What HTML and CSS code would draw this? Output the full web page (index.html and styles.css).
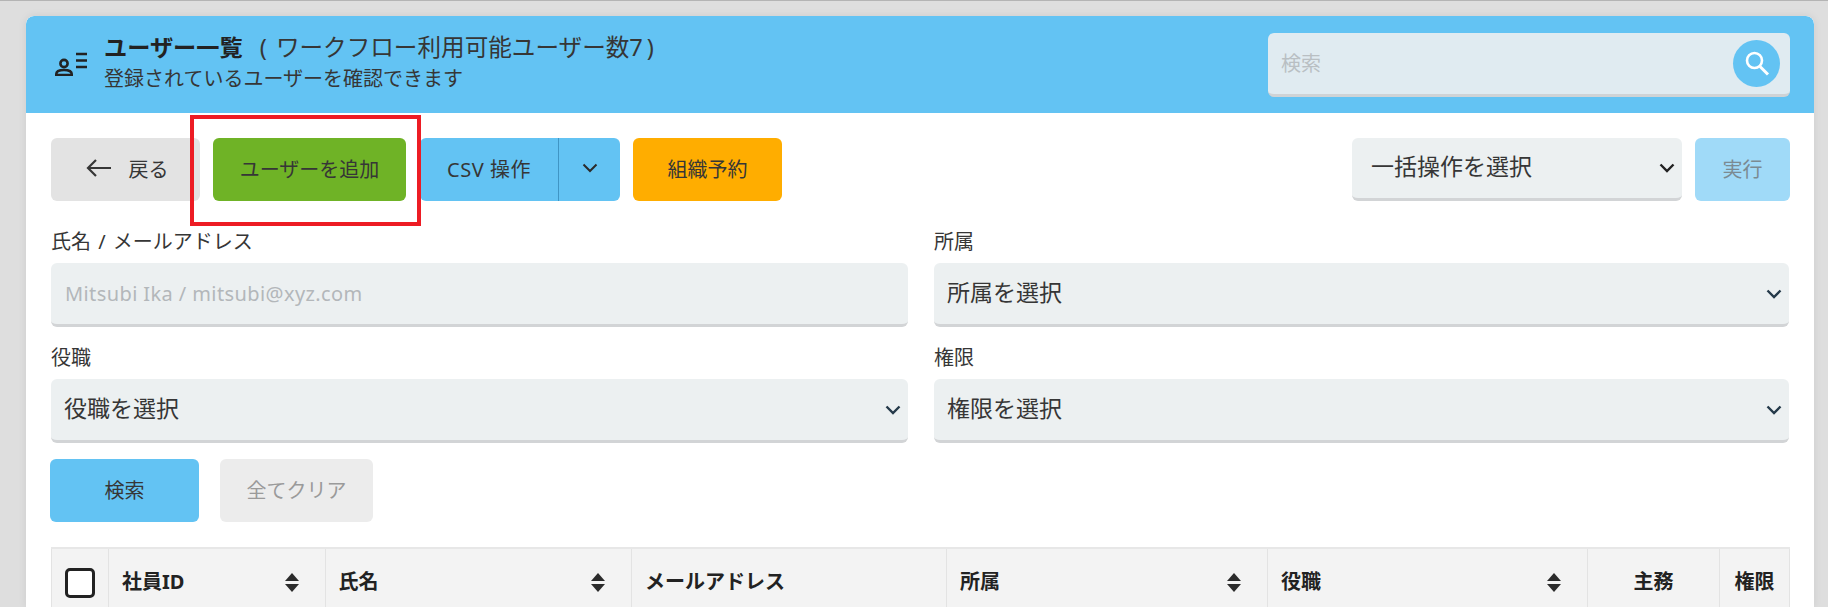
FILE: index.html
```html
<!DOCTYPE html>
<html lang="ja">
<head>
<meta charset="utf-8">
<title>ユーザー一覧</title>
<link rel="stylesheet" href="styles.css">
</head>
<body>
<main class="card">
  <header class="card-head">
    <svg class="head-icon" width="32" height="24" viewBox="0 0 32 24" fill="none" stroke="#222" stroke-width="2.6">
      <circle cx="9" cy="11.5" r="3.6"/>
      <path d="M1.3 23v-1c0-2.6 3-4 7.7-4s7.700 1.400 7.700 4v1z"/>
      <path d="M21 2h11M21 8.500h11M21 15h11"/>
    </svg>
    <div class="head-text">
      <h1 class="head-title"><b>ユーザー一覧</b><span class="head-count">( ワークフロー利用可能ユーザー数7&#8201;)</span></h1>
      <p class="head-sub">登録されているユーザーを確認できます</p>
    </div>
    <div class="head-search">
      <input class="head-input" type="text" placeholder="検索">
      <span class="head-search-btn">
        <svg width="28" height="28" viewBox="0 0 28 28" fill="none" stroke="#fff" stroke-width="2.600">
          <circle cx="11.500" cy="10.500" r="7.500"/>
          <path d="M17 16.500l8 8" stroke-width="3"/>
        </svg>
      </span>
    </div>
  </header>

  <section class="card-body">
    <div class="toolbar">
      <button class="btn btn-back" type="button">
        <svg width="26" height="20" viewBox="0 0 26 20" fill="none" stroke="#363636" stroke-width="2.200"><path d="M25 10H2M10 2l-8 8 8 8"/></svg>
        <span>戻る</span>
      </button>
      <span class="highlight">
        <button class="btn btn-add" type="button">ユーザーを追加</button>
      </span>
      <div class="split">
        <button class="btn split-main" type="button">CSV 操作</button>
        <button class="btn split-arrow" type="button" aria-label="CSV 操作">
          <svg width="16" height="10" viewBox="0 0 16 10" fill="none" stroke="#2b2b2b" stroke-width="2"><path d="M1.500 1.500L8 8l6.500-6.500"/></svg>
        </button>
      </div>
      <button class="btn btn-reserve" type="button">組織予約</button>
      <select class="select select-bulk"><option>一括操作を選択</option></select>
      <button class="btn btn-run" type="button">実行</button>
    </div>

    <div class="filters">
      <label class="field">
        <span class="field-label">氏名 / メールアドレス</span>
        <input class="field-input" type="text" placeholder="Mitsubi Ika / mitsubi@xyz.com">
      </label>
      <label class="field">
        <span class="field-label">所属</span>
        <select class="select"><option>所属を選択</option></select>
      </label>
      <label class="field">
        <span class="field-label">役職</span>
        <select class="select"><option>役職を選択</option></select>
      </label>
      <label class="field">
        <span class="field-label">権限</span>
        <select class="select"><option>権限を選択</option></select>
      </label>
    </div>

    <div class="actions">
      <button class="btn btn-search" type="button">検索</button>
      <button class="btn btn-clear" type="button">全てクリア</button>
    </div>

    <table class="users">
      <colgroup>
        <col class="c-check"><col class="c-id"><col class="c-name"><col class="c-mail">
        <col class="c-dept"><col class="c-role"><col class="c-main"><col class="c-perm">
      </colgroup>
      <thead>
        <tr>
          <th class="th-check"><span class="check"></span></th>
          <th><div class="th-in">社員ID<span class="sort"></span></div></th>
          <th><div class="th-in">氏名<span class="sort"></span></div></th>
          <th><div class="th-in">メールアドレス</div></th>
          <th><div class="th-in">所属<span class="sort"></span></div></th>
          <th><div class="th-in">役職<span class="sort"></span></div></th>
          <th class="th-center">主務</th>
          <th class="th-center">権限</th>
        </tr>
      </thead>
    </table>
  </section>
</main>
</body>
</html>
```
FILE: styles.css
```css
* { box-sizing: border-box; }
html, body { margin: 0; height: 607px; overflow: hidden; }
body {
  background: #dedede;
  border-top: 1px solid #b4b4b4;
  padding: 15px 14px 0 26px;
  font-family: "Noto Sans", "Noto Sans CJK JP", sans-serif;
  color: #363636;
  font-size: 20px;
}
.card {
  background: #fff;
  border-radius: 8px 8px 0 0;
  height: 591px;
  box-shadow: 0 0 8px rgba(0, 0, 0, .08);
  overflow: hidden;
}
.card-head {
  height: 97px;
  background: #63c3f3;
  border-radius: 8px 8px 0 0;
  display: flex;
  align-items: flex-start;
  padding: 0 24px 0 29px;
}
.head-icon { margin-top: 36px; flex: none; }
.head-text { margin-left: 17px; margin-top: 14px; flex: 1; }
.head-title {
  margin: 0;
  font-size: 23.600px;
  line-height: 34px;
  font-weight: 400;
  color: #363636;
  white-space: nowrap;
}
.head-title b { font-weight: 700; color: #222; font-size: 23.200px; }
.head-count { margin-left: 17px; word-spacing: 3px; }
.head-sub { margin: 1px 0 0; font-size: 20px; line-height: 28px; }
.head-search {
  margin-top: 17px;
  width: 522px;
  height: 64px;
  background: #e0ebf1;
  border-bottom: 3px solid #cfd3d6;
  border-radius: 6px;
  display: flex;
  align-items: center;
  padding: 0 10px 0 13px;
}
.head-input {
  flex: 1;
  border: 0;
  outline: 0;
  background: transparent;
  font: inherit;
  color: #363636;
  padding: 0;
}
.head-input::placeholder { color: #b9bfc3; }
.head-search-btn {
  width: 47px;
  height: 47px;
  border-radius: 50%;
  background: #63c3f3;
  display: flex;
  align-items: center;
  justify-content: center;
}
.card-body { padding: 25px 24px 0 25px; }
.btn {
  height: 63px;
  border: 0;
  border-radius: 6px;
  font: inherit;
  color: #363636;
  padding: 0 0 3px;
  display: flex;
  align-items: center;
  justify-content: center;
}
.toolbar { display: flex; align-items: flex-start; }
.btn-back { width: 149px; background: #e3e3e3; gap: 17px; padding-left: 3px; }
.highlight {
  position: relative;
  margin-left: 13px;
  display: block;
}
.highlight::after {
  content: "";
  position: absolute;
  left: -23px;
  right: -15px;
  top: -23px;
  bottom: -25px;
  border: 4px solid #ed1c24;
  pointer-events: none;
}
.btn-add { width: 193px; background: #6fb326; }
.split {
  margin-left: 14px;
  width: 200px;
  height: 63px;
  display: flex;
  background: #63c3f3;
  border-radius: 6px;
}
.split-main {
  width: 139px;
  background: transparent;
  border-right: 1px solid #3f95c4;
  border-radius: 0;
  letter-spacing: .5px;
}
.split-arrow { flex: 1; background: transparent; }
.btn-reserve { width: 149px; margin-left: 13px; background: #ffad00; }
.select {
  appearance: none;
  -webkit-appearance: none;
  width: 100%;
  height: 64px;
  border: 0;
  border-bottom: 3px solid #d2d4d6;
  border-radius: 6px;
  background-color: #ecf0f1;
  background-image: url("data:image/svg+xml,%3Csvg xmlns='http://www.w3.org/2000/svg' width='16' height='10' viewBox='0 0 16 10' fill='none' stroke='%23253a4a' stroke-width='2.400'%3E%3Cpath d='M1.500 1.500L8 8l6.500-6.500'/%3E%3C/svg%3E");
  background-repeat: no-repeat;
  background-position: right 7px center;
  font: inherit;
  font-size: 23px;
  color: #363636;
  padding: 0 0 4px 13px;
  outline: 0;
}
.select-bulk {
  width: 330px;
  height: 63px;
  margin-left: auto;
  padding-left: 19px;
  background-image: url("data:image/svg+xml,%3Csvg xmlns='http://www.w3.org/2000/svg' width='16' height='10' viewBox='0 0 16 10' fill='none' stroke='%23222222' stroke-width='2.400'%3E%3Cpath d='M1.500 1.500L8 8l6.500-6.500'/%3E%3C/svg%3E");
}
.btn-run { width: 95px; margin-left: 13px; background: #a0daf8; color: #7b8a92; }
.filters {
  display: grid;
  grid-template-columns: 857px 855px;
  column-gap: 26px;
  row-gap: 10px;
  margin-top: 20px;
}
.field { display: block; }
.field-label { display: block; height: 42px; line-height: 42px; word-spacing: 2px; }
.field-input {
  display: block;
  width: 100%;
  height: 64px;
  border: 0;
  border-bottom: 3px solid #d2d4d6;
  border-radius: 6px;
  background: #ecf0f1;
  font: inherit;
  color: #363636;
  padding: 0 14px;
  outline: 0;
}
.field-input::placeholder { color: #b3b7ba; letter-spacing: .4px; }
.actions { display: flex; gap: 21px; margin-top: 16px; }
.btn-search { width: 149px; background: #63c3f3; margin-left: -1px; }
.btn-clear { width: 153px; background: #ececec; color: #9a9a9a; }
.users {
  margin-top: 25px;
  width: 1738px;
  table-layout: fixed;
  border-collapse: collapse;
  background: #f3f3f3;
  border-top: 2px solid #e7e7e7;
}
.c-check { width: 57px; }
.c-id { width: 216.500px; }
.c-name { width: 306.500px; }
.c-mail { width: 315px; }
.c-dept { width: 321px; }
.c-role { width: 320px; }
.c-main { width: 132px; }
.c-perm { width: 70px; }
.users th {
  height: 68px;
  padding: 0 13px 3px;
  text-align: left;
  font-weight: 700;
  font-size: 20px;
  color: #222;
  border: 1px solid #e3e3e3;
  border-top: 0;
}
.users .th-check { padding: 1px 0 0 13px; }
.users .th-center { text-align: center; padding: 0 0 3px; }
.th-in { display: flex; align-items: center; justify-content: space-between; }
.check {
  display: block;
  width: 30px;
  height: 30px;
  background: #fff;
  border: 3px solid #222;
  border-radius: 5px;
}
.sort {
  width: 15px;
  height: 19px;
  flex: none;
  margin: 3px 12px 0 0;
  position: relative;
}
.sort::before, .sort::after {
  content: "";
  position: absolute;
  left: 0;
  border-left: 7.500px solid transparent;
  border-right: 7.500px solid transparent;
}
.sort::before { top: 0; border-bottom: 8px solid #2b2b2b; }
.sort::after { bottom: 0; border-top: 8px solid #2b2b2b; }
```
